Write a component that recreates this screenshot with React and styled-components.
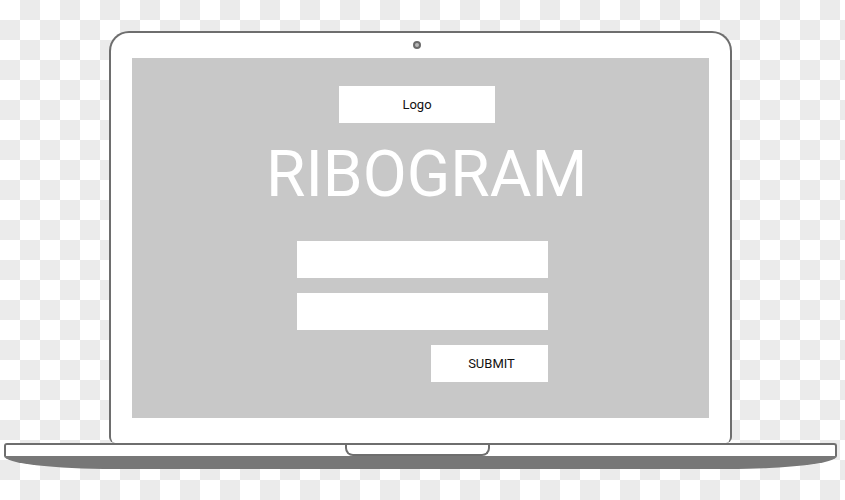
import styled, { createGlobalStyle } from 'styled-components';

const GlobalStyle = createGlobalStyle`
  html, body {
    margin: 0;
    padding: 0;
  }
  body {
    font-family: Roboto, "Liberation Sans", Arial, sans-serif;
    background-color: #ffffff;
    background-image:
      linear-gradient(45deg, #ebebeb 25%, transparent 25%, transparent 75%, #ebebeb 75%),
      linear-gradient(45deg, #ebebeb 25%, transparent 25%, transparent 75%, #ebebeb 75%);
    background-size: 40px 40px;
    background-position: 0 0, 20px 20px;
  }
`;

const Page = styled.div`
  width: 841px;
  height: 500px;
  display: flex;
  flex-direction: column;
  align-items: center;
  padding-top: 31px;
  box-sizing: border-box;
`;

const Lid = styled.div`
  width: 623px;
  height: 412px;
  box-sizing: border-box;
  background: #ffffff;
  border: 2px solid #6e6e6e;
  border-bottom: none;
  border-radius: 20px 20px 6px 6px;
  display: flex;
  flex-direction: column;
  align-items: center;
  padding: 8px 21px 0;
`;

const Camera = styled.div`
  width: 8px;
  height: 8px;
  box-sizing: border-box;
  border-radius: 50%;
  border: 2px solid #6a6a6a;
  background: #b8b8b8;
  margin: 0 7px 9px 0;
`;

const Screen = styled.div`
  width: 577px;
  height: 360px;
  background: #c8c8c8;
  display: flex;
  flex-direction: column;
  align-items: flex-start;
  padding-top: 28px;
  box-sizing: border-box;
`;

const LogoBox = styled.div`
  width: 156px;
  height: 37px;
  margin-left: 207px;
  background: #ffffff;
  display: flex;
  align-items: center;
  justify-content: center;
  font-size: 13px;
  color: #111111;
`;

const Title = styled.h1`
  margin: 12px 0 0 134px;
  font-family: Roboto, "Liberation Sans", Arial, sans-serif;
  font-weight: 400;
  font-size: 64px;
  line-height: 80px;
  color: #ffffff;
  letter-spacing: 0;
`;

const Form = styled.div`
  width: 251px;
  margin: 26px 0 0 165px;
  display: flex;
  flex-direction: column;
  align-items: flex-end;
  gap: 15px;
`;

const Field = styled.div`
  width: 100%;
  height: 37px;
  background: #ffffff;
`;

const SubmitButton = styled.div`
  width: 117px;
  height: 37px;
  background: #ffffff;
  display: flex;
  align-items: center;
  justify-content: center;
  padding-left: 4px;
  box-sizing: border-box;
  font-size: 13px;
  color: #111111;
`;

const Base = styled.div`
  width: 833px;
  display: flex;
  flex-direction: column;
`;

const Deck = styled.div`
  height: 13px;
  box-sizing: border-box;
  background: #ffffff;
  border: 2px solid #6e6e6e;
  border-bottom: none;
  border-radius: 3px 3px 0 0;
  display: flex;
  justify-content: center;
`;

const Notch = styled.div`
  width: 145px;
  height: 11px;
  box-sizing: border-box;
  border: 2px solid #6e6e6e;
  border-top: none;
  border-radius: 0 0 8px 8px;
  margin-right: 6px;
`;

const Bottom = styled.div`
  height: 13px;
  background: #777777;
  border-radius: 0 0 110px 110px / 0 0 13px 13px;
`;

export default function App() {
  return (
    <>
      <GlobalStyle />
      <Page>
        <Lid>
          <Camera />
          <Screen>
            <LogoBox>Logo</LogoBox>
            <Title>RIBOGRAM</Title>
            <Form>
              <Field />
              <Field />
              <SubmitButton>SUBMIT</SubmitButton>
            </Form>
          </Screen>
        </Lid>
        <Base>
          <Deck>
            <Notch />
          </Deck>
          <Bottom />
        </Base>
      </Page>
    </>
  );
}
